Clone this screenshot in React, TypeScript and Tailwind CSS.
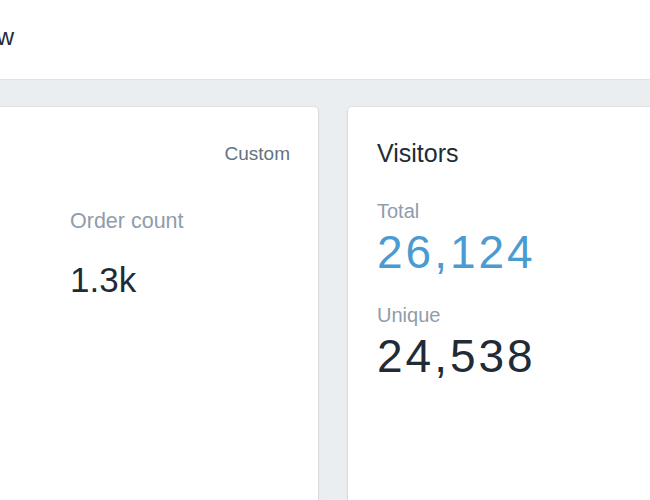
import React from 'react'

const font = { fontFamily: '"Liberation Sans", "Helvetica Neue", Arial, sans-serif' }

const card =
  'shrink-0 h-[420px] bg-white rounded-[4px] shadow-[0_0_0_1px_rgba(63,63,68,0.05),0_1px_3px_rgba(63,63,68,0.12)]'

function Metric({ label, value, accent }: { label: string; value: string; accent?: boolean }) {
  return (
    <div>
      <div className="text-[20px] leading-none text-[#8f9cab]">{label}</div>
      <div
        className={`mt-[8px] text-[46px] leading-none tracking-[3px] ${accent ? 'text-[#4a9bd2]' : 'text-[#212b36]'}`}
      >
        {value}
      </div>
    </div>
  )
}

export default function App() {
  return (
    <div className="w-[650px] h-[500px] overflow-hidden bg-[#ebeef1]" style={font}>
      <header className="h-[80px] bg-white border-b border-[#dfe3e8] pt-[25px] whitespace-nowrap">
        <h1 className="-ml-[86px] text-[24px] leading-none text-[#212b36]">Overview</h1>
      </header>

      <main className="pt-[27px]">
        <div className="flex gap-[30px]">
          {/* sales card, scrolled partly out of view */}
          <section className={`${card} -ml-[40px] w-[358px] pl-[110px] pr-[28px] pt-[37px]`}>
            <div className="flex justify-end">
              <span className="text-[19px] leading-none text-[#637381]">Custom</span>
            </div>
            <div className="mt-[48px]">
              <div className="text-[21.5px] leading-none text-[#8f9cab]">Order count</div>
              <div className="mt-[29px] text-[35px] leading-none text-[#212b36]">1.3k</div>
            </div>
          </section>

          <section className={`${card} w-[400px] px-[29px] pt-[34px]`}>
            <h2 className="text-[25px] leading-none text-[#212b36]">Visitors</h2>
            <div className="mt-[35px] space-y-[30px]">
              <Metric label="Total" value="26,124" accent />
              <Metric label="Unique" value="24,538" />
            </div>
          </section>
        </div>
      </main>
    </div>
  )
}
